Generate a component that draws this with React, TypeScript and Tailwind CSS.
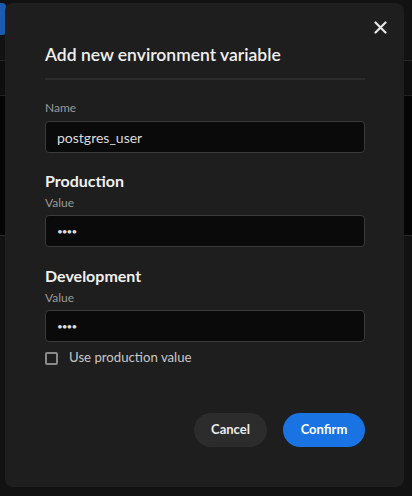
import React from "react";

export default function App() {
  const font = { fontFamily: "Lato, 'Noto Sans', sans-serif" };
  return (
    <div className="relative w-[412px] h-[496px] overflow-hidden bg-[#111111]" style={font}>
      {/* background app (behind overlay) */}
      <div className="flex flex-col w-full">
        <div className="h-[60px] bg-[#121212] flex items-start pt-[3px]">
          <div className="w-[6px] h-[32px] bg-[#1a5bb0] rounded-r-sm" />
        </div>
        <div className="h-px bg-[#262626]" />
        <div className="h-[34px] bg-[#0e0e0e]" />
        <div className="h-px bg-[#222222]" />
        <div className="h-[139px] bg-[#050505]" />
        <div className="h-px bg-[#2a2a2a]" />
        <div className="h-[260px] bg-[#121212]" />
      </div>

      {/* modal */}
      <div className="absolute left-[5px] top-[3px] w-[399px] h-[484px] rounded-lg bg-[#1e1e1e] pl-[40px] pr-[39px] pt-[40px] flex flex-col">
        <button className="absolute left-[368px] top-[17px] w-[14px] h-[14px] flex items-center justify-center">
          <svg width="13" height="13" viewBox="0 0 13 13" fill="none">
            <path d="M1.5 1.5 L11.5 11.5 M11.5 1.5 L1.5 11.5" stroke="#e6e6e6" strokeWidth="2.2" strokeLinecap="round" />
          </svg>
        </button>

        <h2 className="text-[17.5px] leading-[24px] font-semibold text-[#f0f0f0]">Add new environment variable</h2>
        <div className="mt-[11px] h-[2px] bg-[#2c2c2c]" />

        <label className="mt-[20px] text-[12px] leading-[16px] text-[#9a9a9a]">Name</label>
        <div className="mt-[5px] h-[32px] rounded-[4px] border border-[#3a3a3a] bg-[#0a0a0a] flex items-center px-[11px] text-[14px] text-[#dcdcdc]">
          postgres_user
        </div>

        <h3 className="mt-[18px] text-[16px] leading-[20px] font-bold text-[#f0f0f0]">Production</h3>
        <label className="mt-[4px] text-[12px] leading-[16px] text-[#9a9a9a]">Value</label>
        <div className="mt-[4px] h-[32px] rounded-[4px] border border-[#3a3a3a] bg-[#0a0a0a] flex items-center px-[11px] text-[10px] tracking-[-1px] text-[#dcdcdc]">
          ••••
        </div>

        <h3 className="mt-[19px] text-[16px] leading-[20px] font-bold text-[#f0f0f0]">Development</h3>
        <label className="mt-[4px] text-[12px] leading-[16px] text-[#9a9a9a]">Value</label>
        <div className="mt-[4px] h-[32px] rounded-[4px] border border-[#3a3a3a] bg-[#0a0a0a] flex items-center px-[11px] text-[10px] tracking-[-1px] text-[#dcdcdc]">
          ••••
        </div>

        <div className="mt-[8px] flex items-center gap-[11px] h-[16px]">
          <div className="w-[13px] h-[13px] rounded-[2px] border-2 border-[#8a8a8a]" />
          <span className="text-[13.2px] text-[#c8c8c8]">Use production value</span>
        </div>

        <div className="mt-[47px] flex justify-end gap-[16px]">
          <button className="h-[34px] w-[73px] rounded-full bg-[#2c2c2c] text-[13px] font-bold text-[#ececec]">Cancel</button>
          <button className="h-[34px] w-[82px] rounded-full bg-[#1a73e3] text-[13px] font-bold text-white">Confirm</button>
        </div>
      </div>
    </div>
  );
}
